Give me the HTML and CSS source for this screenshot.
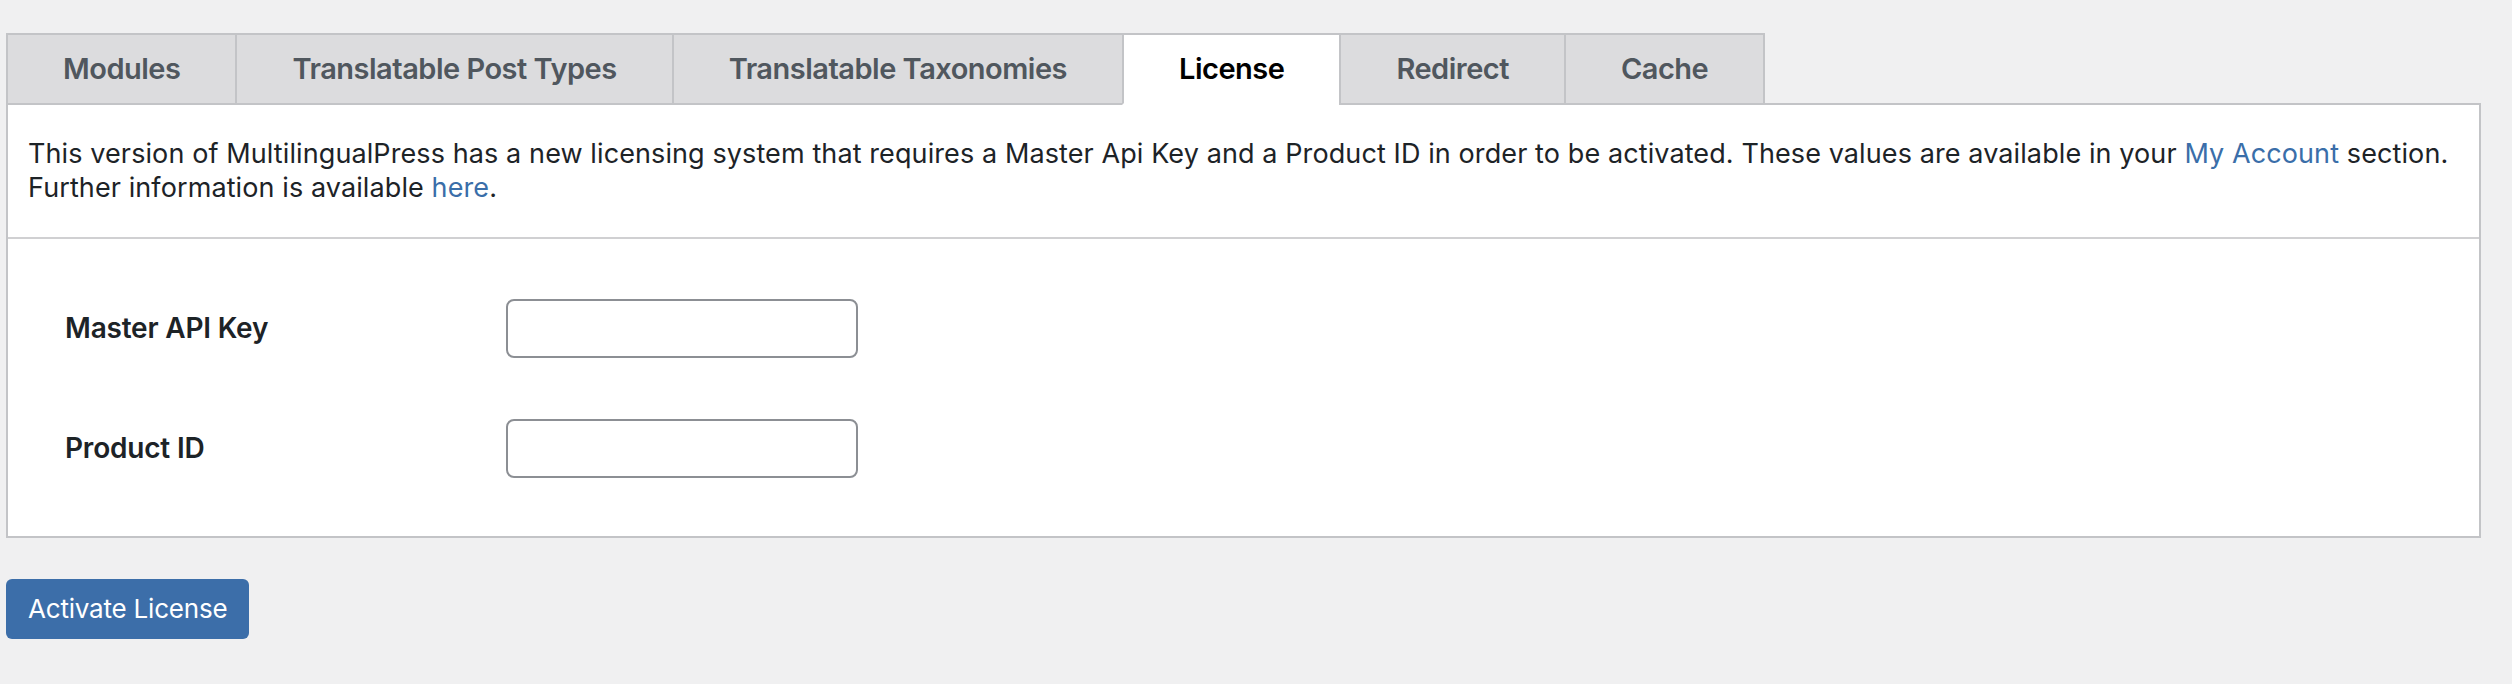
FILE: index.html
```html
<!DOCTYPE html>
<html lang="en">
<head>
<meta charset="utf-8">
<title>MultilingualPress – License</title>
<link rel="stylesheet" href="styles.css">
</head>
<body>
<div class="wrap">
  <nav class="tabs">
    <a class="tab" href="#">Modules</a>
    <a class="tab" href="#">Translatable Post Types</a>
    <a class="tab" href="#">Translatable Taxonomies</a>
    <a class="tab tab-active" href="#">License</a>
    <a class="tab" href="#">Redirect</a>
    <a class="tab tab-last" href="#">Cache</a>
  </nav>
  <section class="panel">
    <div class="intro">
      <p class="intro-text">This version of MultilingualPress has a new licensing system that requires a Master Api Key and a Product ID in order to be activated. These values are available in your <a class="link" href="#">My Account</a> section.<br>Further information is available <a class="link" href="#">here</a>.</p>
    </div>
    <div class="form">
      <div class="row">
        <label class="label" for="key">Master API Key</label>
        <input class="field" id="key" type="text">
      </div>
      <div class="row">
        <label class="label" for="pid">Product ID</label>
        <input class="field" id="pid" type="text">
      </div>
    </div>
  </section>
  <button class="btn" type="button">Activate License</button>
</div>
</body>
</html>
```
FILE: styles.css
```css
* { box-sizing: border-box; }
html, body { margin: 0; padding: 0; }
body {
  background: #f0f0f1;
  font-family: Inter, "Noto Sans", "Liberation Sans", sans-serif;
  color: #1d2327;
  width: 2512px;
  height: 684px;
  overflow: hidden;
}
.wrap {
  padding: 33px 31px 0 6px;
}
.tabs {
  display: flex;
  border-bottom: 2px solid #c3c4c7;
}
.tab {
  display: block;
  height: 72px;
  margin-bottom: -2px;
  padding: 0 55px;
  border: 2px solid #c3c4c7;
  border-right: none;
  background: #dcdcde;
  color: #50575e;
  font-size: 29px;
  font-weight: 600;
  line-height: 68px;
  text-decoration: none;
  white-space: nowrap;
  letter-spacing: -0.5px;
}
.tab-last { border-right: 2px solid #c3c4c7; }
.tab-active {
  background: #fff;
  color: #000;
  border-bottom-color: #fff;
}
.panel {
  background: #fff;
  border: 2px solid #c3c4c7;
  border-top: none;
}
.intro {
  padding: 32px 20px;
  border-bottom: 2px solid #d0d0d2;
}
.intro-text {
  margin: 0;
  font-size: 27px;
  line-height: 34px;
  letter-spacing: 0.1px;
}
.link { color: #3a6ea9; text-decoration: none; }
.form {
  padding: 29px 0 28px 57px;
}
.row {
  display: flex;
  align-items: center;
  height: 120px;
}
.label {
  width: 441px;
  font-size: 28px;
  font-weight: 600;
  letter-spacing: -0.2px;
  color: #1d2327;
}
.field {
  width: 352px;
  height: 59px;
  border: 2px solid #8c8f94;
  border-radius: 8px;
  background: #fff;
  margin: 0;
  padding: 0 16px;
  font: inherit;
}
.btn {
  margin-top: 41px;
  height: 60px;
  padding: 0 22px;
  border: none;
  border-radius: 6px;
  background: #3c6ea9;
  color: #fff;
  font-family: inherit;
  font-size: 26px;
  letter-spacing: -0.2px;
  line-height: 60px;
  cursor: pointer;
}
```
